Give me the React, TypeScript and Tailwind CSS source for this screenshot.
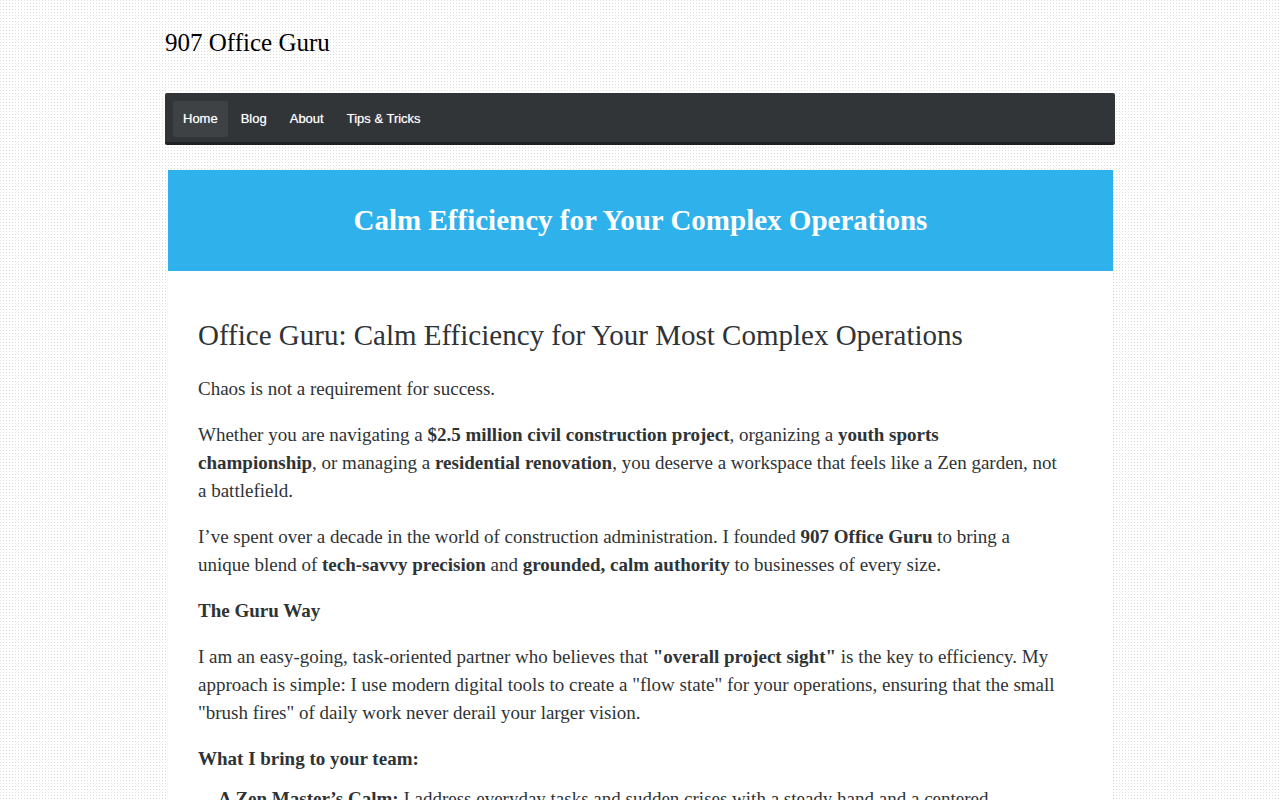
import React from 'react';

const navItems = [
  { label: "Home", href: "#home", active: true },
  { label: "Blog", href: "#blog", active: false },
  { label: "About", href: "#about", active: false },
  { label: "Tips & Tricks", href: "#tips", active: false },
];

const Header = () => (
  <header>
    <h1 className="pt-7 text-[25px] leading-[30px] text-black">
      <a href="#home">907 Office Guru</a>
    </h1>
    <nav className="mt-[35px] rounded-[2px] border-b-[3px] border-[#202325] bg-[#313538] px-2 pt-2 pb-[5px] font-['Liberation_Sans',sans-serif] text-[13px] leading-5 text-white [text-shadow:0_0_1px_rgba(255,255,255,0.6)]">
      <ul className="flex gap-[3px]">
        {navItems.map((item) => (
          <li key={item.label}>
            <a
              href={item.href}
              className={`block rounded-[2px] px-[10px] py-2 ${item.active ? "bg-[#3e4245]" : ""}`}
            >
              {item.label}
            </a>
          </li>
        ))}
      </ul>
    </nav>
  </header>
);

const Banner = () => (
  <div className="bg-[#2fb1eb] px-8 py-8 text-center">
    <h2 className="text-[29px] leading-[37px] font-bold text-white">
      Calm Efficiency for Your Complex Operations
    </h2>
  </div>
);

const Article = () => (
  <article className="px-[30px] pt-[44px] pb-8 text-[19px] leading-7 text-[#2e3336]">
    <h2 className="mb-5 text-[29px] leading-10">
      Office Guru: Calm Efficiency for Your Most Complex Operations
    </h2>
    <div className="flex max-w-[861px] flex-col gap-[18px]">
      <p>Chaos is not a requirement for success.</p>
      <p>
        Whether you are navigating a <strong>$2.5 million civil construction project</strong>, organizing
        a <strong>youth sports championship</strong>, or managing a <strong>residential renovation</strong>,
        you deserve a workspace that feels like a Zen garden, not a battlefield.
      </p>
      <p>
        I’ve spent over a decade in the world of construction administration. I founded{" "}
        <strong>907 Office Guru</strong> to bring a unique blend of <strong>tech-savvy precision</strong>{" "}
        and <strong>grounded, calm authority</strong> to businesses of every size.
      </p>
      <h3 className="font-bold">The Guru Way</h3>
      <p>
        I am an easy-going, task-oriented partner who believes that <strong>"overall project sight"</strong>{" "}
        is the key to efficiency. My approach is simple: I use modern digital tools to create a "flow
        state" for your operations, ensuring that the small "brush fires" of daily work never derail your
        larger vision.
      </p>
      <h3 className="font-bold">What I bring to your team:</h3>
    </div>
    <ul className="mt-3 pl-5">
      <li>
        <strong>A Zen Master’s Calm:</strong> I address everyday tasks and sudden crises with a steady
        hand and a centered
      </li>
    </ul>
  </article>
);

const App = () => {
  return (
    <div className="min-h-screen bg-[conic-gradient(from_0deg_at_1px_1px,#ffffff_75%,#dddddd_0)] bg-size-[3px_3px] font-['Liberation_Serif',serif]">
      <div className="mx-auto max-w-[950px]">
        <Header />
        <main className="mt-[25px] mr-[2px] ml-[3px] bg-white shadow-[0_0_2px_rgba(0,0,0,0.1)]">
          <Banner />
          <Article />
        </main>
      </div>
    </div>
  );
};

export default App;
